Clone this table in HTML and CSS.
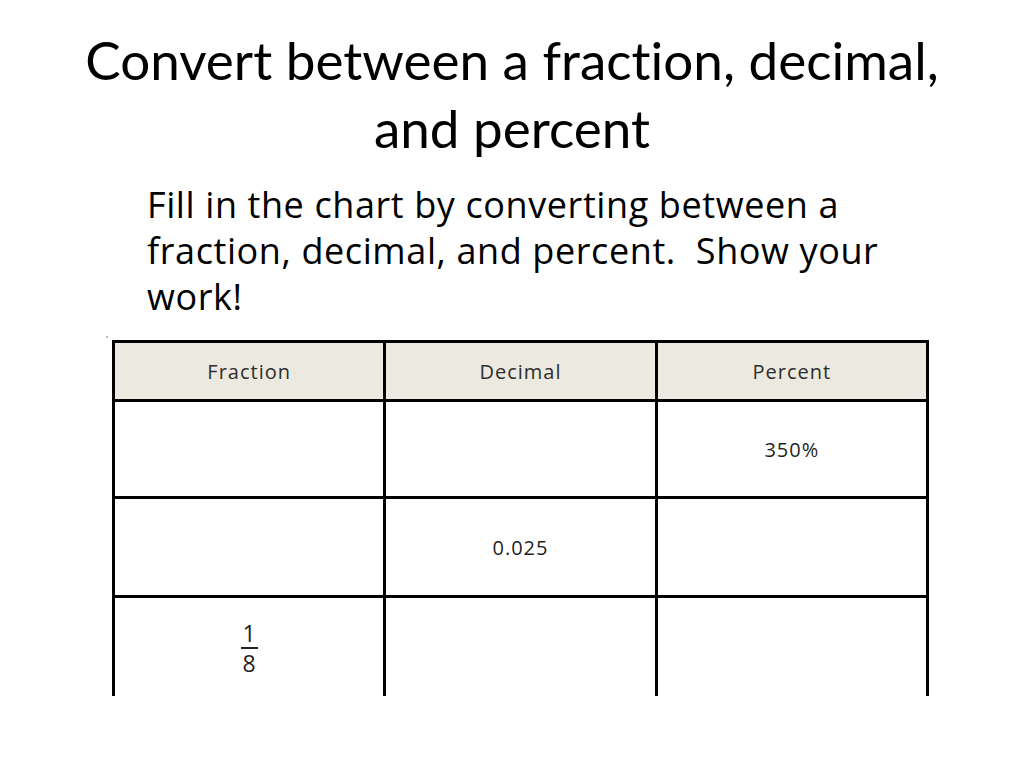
FILE: index.html
```html
<!DOCTYPE html>
<html>
<head>
<meta charset="utf-8">
<link rel="stylesheet" href="styles.css">
</head>
<body>
<div class="slide">
  <h1 class="title">Convert between a fraction, decimal,<br>and percent</h1>
  <p class="body-text">Fill in the chart by converting between a fraction, decimal, and percent.&nbsp; Show your work!</p>
  <div class="table-wrap">
    <span class="mark"></span>
    <table class="chart">
      <thead>
        <tr><th>Fraction</th><th>Decimal</th><th>Percent</th></tr>
      </thead>
      <tbody>
        <tr><td></td><td></td><td>350%</td></tr>
        <tr class="mid"><td></td><td>0.025</td><td></td></tr>
        <tr class="last"><td><span class="frac"><span class="num">1</span><span class="den">8</span></span></td><td></td><td></td></tr>
      </tbody>
    </table>
  </div>
</div>
</body>
</html>
```
FILE: styles.css
```css
html, body {
  margin: 0;
  padding: 0;
  background: #fff;
}
.slide {
  width: 1024px;
  height: 768px;
  overflow: hidden;
  font-family: Lato, "Open Sans", sans-serif;
  font-variant-ligatures: none;
  color: #000;
}
.title {
  margin: 0;
  padding-top: 26px;
  font-weight: normal;
  font-size: 53px;
  line-height: 68px;
  text-align: center;
}
.body-text {
  margin: 20px 0 0 147px;
  width: 760px;
  font-family: "Open Sans", Lato, sans-serif;
  font-size: 36px;
  letter-spacing: 0.6px;
  line-height: 46px;
}
.table-wrap {
  position: relative;
  margin: 20px 0 0 112px;
  width: 817px;
}
.mark {
  position: absolute;
  left: -6px;
  top: -4px;
  width: 2px;
  height: 2px;
  background: #bbb;
}
.chart {
  border-collapse: collapse;
  width: 817px;
  table-layout: fixed;
  font-family: "Open Sans", Lato, sans-serif;
  font-size: 20px;
  letter-spacing: 1px;
  color: #1f1f1f;
}
.chart th, .chart td {
  border: 3px solid #000;
  text-align: center;
  vertical-align: middle;
  padding: 0;
}
.chart th {
  height: 56px;
  background: #ECE9E0;
  font-weight: normal;
  color: #2e2e2e;
}
.chart td {
  height: 94px;
}
.chart tr.mid td {
  height: 96px;
}
.chart tr.last td {
  border-bottom: none;
  height: 98px;
}
.frac {
  display: inline-flex;
  flex-direction: column;
  align-items: center;
  line-height: 22px;
  font-size: 23px;
  letter-spacing: 0;
  color: #222;
}
.frac .num {
  border-bottom: 2px solid #222;
  padding: 0 2px 3px;
  margin-bottom: 3px;
}
```
